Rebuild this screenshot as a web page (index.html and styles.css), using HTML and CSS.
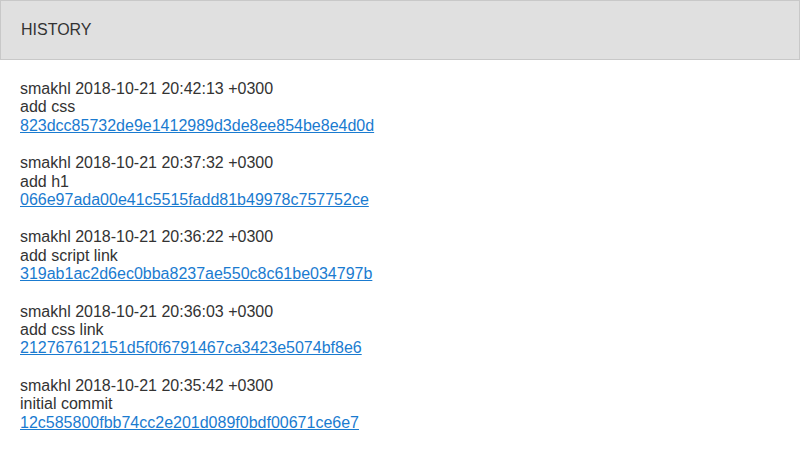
FILE: index.html
```html
<!DOCTYPE html>
<html>
<head>
<meta charset="utf-8">
<link rel="stylesheet" href="styles.css">
</head>
<body>
<header class="header">HISTORY</header>
<main class="history">
  <div class="commit">
    <div>smakhl 2018-10-21 20:42:13 +0300</div>
    <div>add css</div>
    <a href="#">823dcc85732de9e1412989d3de8ee854be8e4d0d</a>
  </div>
  <div class="commit">
    <div>smakhl 2018-10-21 20:37:32 +0300</div>
    <div>add h1</div>
    <a href="#">066e97ada00e41c5515fadd81b49978c757752ce</a>
  </div>
  <div class="commit">
    <div>smakhl 2018-10-21 20:36:22 +0300</div>
    <div>add script link</div>
    <a href="#">319ab1ac2d6ec0bba8237ae550c8c61be034797b</a>
  </div>
  <div class="commit">
    <div>smakhl 2018-10-21 20:36:03 +0300</div>
    <div>add css link</div>
    <a href="#">212767612151d5f0f6791467ca3423e5074bf8e6</a>
  </div>
  <div class="commit">
    <div>smakhl 2018-10-21 20:35:42 +0300</div>
    <div>initial commit</div>
    <a href="#">12c585800fbb74cc2e201d089f0bdf00671ce6e7</a>
  </div>
</main>
</body>
</html>
```
FILE: styles.css
```css
html, body {
  margin: 0;
  padding: 0;
  background: #fff;
}
body {
  font-family: "Liberation Sans", Arial, sans-serif;
  font-size: 16px;
  color: #333;
}
.header {
  display: block;
  background: #e0e0e0;
  border: 1px solid #c8c8c8;
  padding: 20px;
  line-height: 18px;
  height: 18px;
}
.history {
  display: flex;
  flex-direction: column;
  gap: 19px;
  padding: 20px;
  line-height: 18.4px;
}
.commit {
  display: flex;
  flex-direction: column;
  align-items: flex-start;
}
.commit a {
  color: #1a7bd0;
  text-decoration: underline;
}
```
